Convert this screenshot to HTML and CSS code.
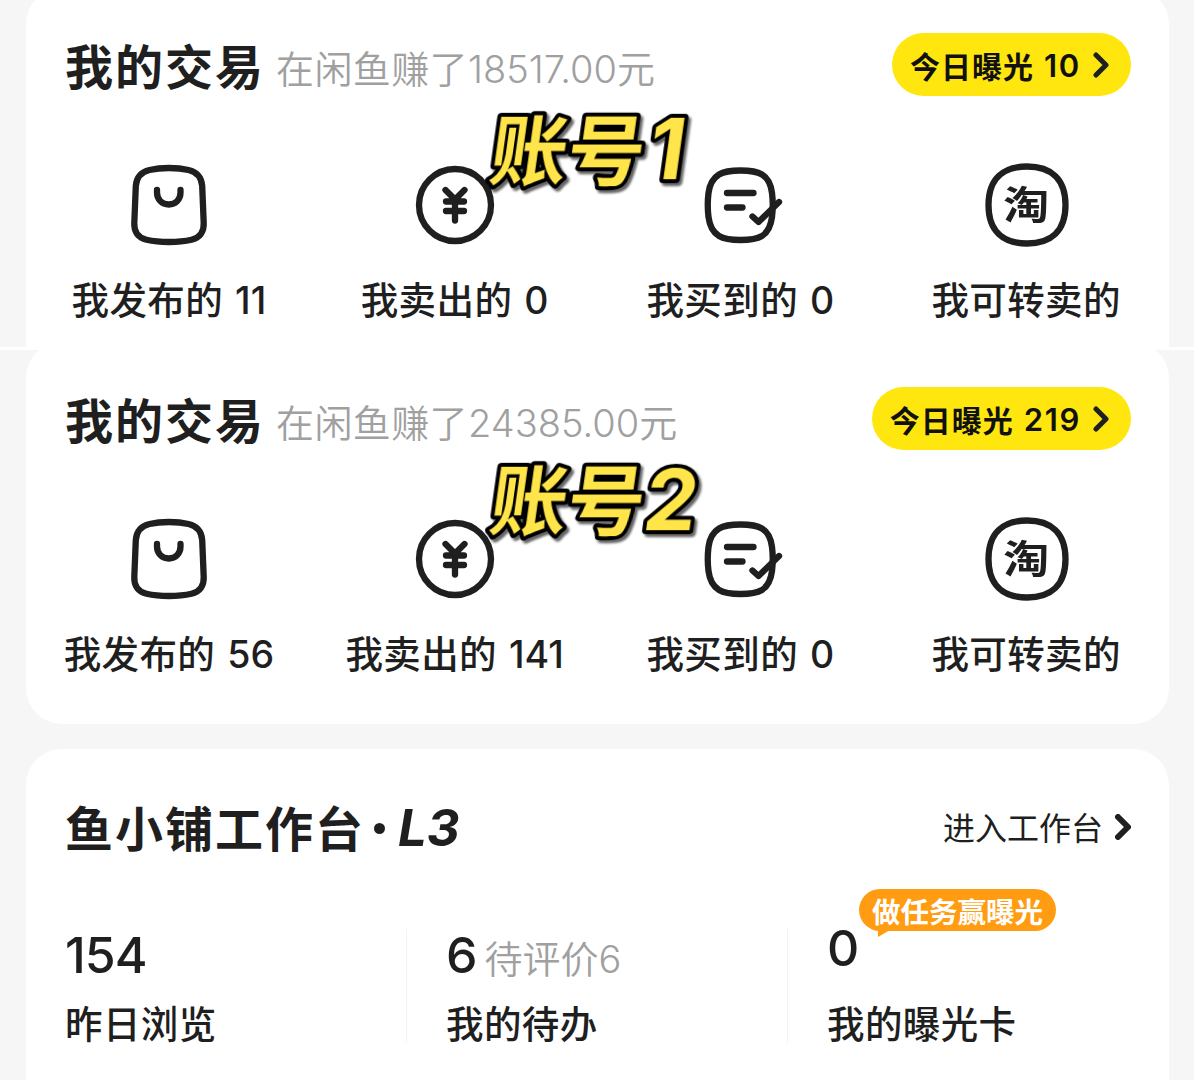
FILE: index.html
```
<!DOCTYPE html>
<html lang="zh-CN">
<head>
  <meta charset="UTF-8">
  <title>我的交易</title>
  <link rel="stylesheet" href="styles.css">
</head>
<body>
  <!-- shared icons -->
  <svg class="sprite" width="0" height="0">
    <symbol id="bag" viewBox="0 0 90 90">
      <path d="M45 8C53 8 59 8.700 64.500 10C73 12 77.500 17.500 78.200 26L79.700 63C80.200 72 75.500 77.800 67.500 79.800C60 81.500 53 82 45 82S30 81.500 22.500 79.800C14.500 77.800 9.800 72 10.300 63L11.800 26C12.500 17.500 17 12 25.500 10C31 8.700 37 8 45 8Z"/>
      <path d="M33 30V32.500C33 39.500 38 44.500 44.800 44.500S56.500 39.500 56.500 32.500V30"/>
    </symbol>
    <symbol id="yen" viewBox="0 0 90 90">
      <circle cx="45" cy="45" r="36"/>
      <path d="M35.500 30L45 39.500L54.500 30M36 41.500H54M36 51H54M45 40V60.500"/>
    </symbol>
    <symbol id="list" viewBox="0 0 90 90">
      <path d="M45.500 10.500C55 10.500 62 11.500 67 14.500C73.500 18.500 76 25 77 33C78 41 78 49 77 57C76 65 73 72 67 76C62 79 55 80 45.500 80S29 79 24 76C17.500 72 14.500 65 13.500 57C12.500 49 12.500 41 13.500 33C14.500 25 17.500 18.500 24 14.500C29 11.500 36 10.500 45.500 10.500Z"/>
      <path d="M32 33H58.500M32 47.500H47.500M57.500 56.500L63.500 62L84 42"/>
    </symbol>
    <symbol id="tao" viewBox="0 0 90 90">
      <path d="M46 6.500C70 6.500 84.500 19 84.500 45S70 83.500 46 83.500S7.500 71 7.500 45S22 6.500 46 6.500Z"/>
    </symbol>
    <symbol id="arrow" viewBox="0 0 16 26">
      <path d="M3 3L13 13L3 23"/>
    </symbol>
  </svg>

  <section class="account first">
    <div class="card">
      <div class="card-head">
        <h2>我的交易</h2>
        <p class="earned">在闲鱼赚了<span class="num">18517.00</span>元</p>
        <a class="pill">今日曝光<span class="num">10</span><svg class="arrow"><use href="#arrow"/></svg></a>
      </div>
      <div class="menu">
        <div class="item">
          <svg class="icon"><use href="#bag"/></svg>
          <span class="label">我发布的<span class="num">11</span></span>
        </div>
        <div class="item">
          <svg class="icon"><use href="#yen"/></svg>
          <span class="label">我卖出的<span class="num">0</span></span>
        </div>
        <div class="item">
          <svg class="icon"><use href="#list"/></svg>
          <span class="label">我买到的<span class="num">0</span></span>
        </div>
        <div class="item">
          <div class="tao"><svg class="icon"><use href="#tao"/></svg><span>淘</span></div>
          <span class="label">我可转卖的</span>
        </div>
      </div>
    </div>
    <svg class="sticker" width="240" height="110">
      <text x="21" y="82">账号<tspan class="digit" x="179" y="82">1</tspan></text>
    </svg>
  </section>

  <section class="account second">
    <div class="card">
      <div class="card-head">
        <h2>我的交易</h2>
        <p class="earned">在闲鱼赚了<span class="num">24385.00</span>元</p>
        <a class="pill">今日曝光<span class="num">219</span><svg class="arrow"><use href="#arrow"/></svg></a>
      </div>
      <div class="menu">
        <div class="item">
          <svg class="icon"><use href="#bag"/></svg>
          <span class="label">我发布的<span class="num">56</span></span>
        </div>
        <div class="item">
          <svg class="icon"><use href="#yen"/></svg>
          <span class="label">我卖出的<span class="num">141</span></span>
        </div>
        <div class="item">
          <svg class="icon"><use href="#list"/></svg>
          <span class="label">我买到的<span class="num">0</span></span>
        </div>
        <div class="item">
          <div class="tao"><svg class="icon"><use href="#tao"/></svg><span>淘</span></div>
          <span class="label">我可转卖的</span>
        </div>
      </div>
    </div>
    <svg class="sticker" width="240" height="110">
      <text x="21" y="82">账号<tspan class="digit" x="175" y="83">2</tspan></text>
    </svg>
  </section>

  <section class="card shop">
    <div class="shop-head">
      <h2>鱼小铺工作台</h2>
      <span class="dot"></span>
      <span class="level">L3</span>
      <a class="enter">进入工作台<svg class="arrow"><use href="#arrow"/></svg></a>
    </div>
    <div class="stats">
      <div class="stat">
        <div class="value">154</div>
        <div class="label">昨日浏览</div>
      </div>
      <div class="stat">
        <div class="value">6<span class="pending">待评价<span class="num">6</span></span></div>
        <div class="label">我的待办</div>
      </div>
      <div class="stat raised">
        <div class="value">0</div>
        <div class="label">我的曝光卡</div>
        <div class="bubble">做任务赢曝光</div>
      </div>
    </div>
  </section>
</body>
</html>
```
FILE: styles.css
```
* {
  box-sizing: border-box;
}

body {
  margin: 0;
  background-color: #f6f6f6;
  color: #1f1f1f;
  font-family: Inter, "Noto Sans CJK SC", sans-serif;
}

h2,
p {
  margin: 0;
}

.sprite {
  position: absolute;
}

svg {
  fill: none;
  stroke: #1f1f1f;
  stroke-width: 6.3;
  stroke-linecap: round;
  stroke-linejoin: round;
}

.num {
  letter-spacing: 0;
}

.card {
  margin: 0 25px 0 26px;
  background-color: #fff;
  border-radius: 36px;
}

/* account blocks */
.account {
  position: relative;
  overflow: hidden;
}

.first {
  height: 350px;
  border-bottom: 3px solid #fff;
}

.second {
  height: 374px;
}

.account .card {
  height: 382px;
  padding-top: 45px;
}

.first .card {
  height: 400px;
  margin-top: -12px;
}

.second .card {
  margin-top: -8px;
}

.card-head {
  display: flex;
  align-items: center;
  height: 63px;
  padding: 0 38px 0 39px;
}

h2 {
  padding-top: 4px;
  font-size: 48px;
  line-height: 60px;
  font-weight: 700;
  letter-spacing: 2px;
}

.card-head h2 {
  padding-top: 7px;
}

.earned {
  margin: 9px 0 0 11px;
  color: #a0a0a0;
  font-size: 38px;
  line-height: 54px;
  font-weight: 350;
  letter-spacing: 0.4px;
}

.earned .num {
  font-weight: 300;
  letter-spacing: 0;
}

.pill {
  display: flex;
  align-items: center;
  height: 63px;
  margin-left: auto;
  padding: 1px 22px 0 18px;
  border-radius: 32px;
  background-color: #ffe60f;
  color: #111;
  font-size: 30px;
  font-weight: 700;
  letter-spacing: 1px;
}

.pill .num {
  margin-left: 10px;
  font-size: 31px;
  font-weight: 600;
  letter-spacing: 1.7px;
}

.arrow {
  width: 16px;
  height: 26px;
  margin-left: 12px;
  stroke-width: 5;
}

.pill .arrow {
  margin-top: -1px;
}

.menu {
  display: grid;
  grid-template-columns: repeat(4, 1fr);
  margin-top: 64px;
}

.item {
  display: flex;
  flex-direction: column;
  align-items: center;
}

.icon {
  display: block;
  width: 90px;
  height: 90px;
}

.label {
  font-size: 37.500px;
  line-height: 50px;
  font-weight: 500;
  letter-spacing: 0.4px;
}

.item .label {
  margin-top: 26px;
}

.label .num {
  margin-left: 12px;
}

.tao {
  display: grid;
  place-items: center;
}

.tao > * {
  grid-area: 1 / 1;
}

.tao span {
  font-size: 46px;
  line-height: 60px;
  font-weight: 700;
  transform: scaleY(0.84);
}

/* sticker text laid over the cards */
.sticker {
  position: absolute;
  left: 470px;
  top: 97px;
  overflow: visible;
  fill: #ffe54a;
  stroke: #000;
  stroke-width: 8px;
  paint-order: stroke fill;
  font-size: 77px;
  font-weight: 700;
  filter: drop-shadow(3px 3px 1px rgba(0, 0, 0, 0.6));
  transform: skewX(-8deg);
}

.digit {
  font-size: 84px;
}

/* shop workbench */
.shop {
  height: 331px;
  margin-top: 25px;
  padding-top: 48px;
  border-radius: 36px 36px 0 0;
}

.shop-head {
  display: flex;
  align-items: center;
  height: 62px;
  padding: 0 38px 0 39px;
}

.dot {
  width: 11px;
  height: 11px;
  margin: 0 13px 0 9px;
  border-radius: 50%;
  background-color: #1f1f1f;
}

.level {
  font-size: 51px;
  line-height: 60px;
  font-weight: 700;
  font-style: italic;
}

.enter {
  display: flex;
  align-items: center;
  margin-left: auto;
  padding-top: 1px;
  font-size: 32px;
  line-height: 46px;
}

.enter .arrow {
  margin-top: -4px;
  stroke-width: 6;
}

.stats {
  display: grid;
  grid-template-columns: repeat(3, 381px);
  margin-top: 70px;
}

.stat {
  position: relative;
  height: 114px;
  padding-left: 39px;
  border-right: 1px solid #f3f3f3;
}

.stat:last-child {
  border-right: none;
}

.value {
  height: 71px;
  font-size: 50px;
  line-height: 52px;
  font-weight: 500;
  letter-spacing: -1px;
}

.raised .value {
  position: relative;
  top: -7px;
}

.pending {
  margin-left: 8px;
  color: #a0a0a0;
  font-size: 38px;
  font-weight: 350;
  letter-spacing: 0;
}

.bubble {
  position: absolute;
  left: 71px;
  top: -40px;
  height: 42px;
  padding: 0 13px;
  border-radius: 21px;
  background-color: #ff9c12;
  color: #fff;
  font-size: 28.500px;
  line-height: 47px;
  font-weight: 700;
  white-space: nowrap;
}

.bubble::after {
  content: "";
  position: absolute;
  left: 19px;
  top: 41px;
  border-top: 7px solid #ff9c12;
  border-right: 12px solid transparent;
}
```
